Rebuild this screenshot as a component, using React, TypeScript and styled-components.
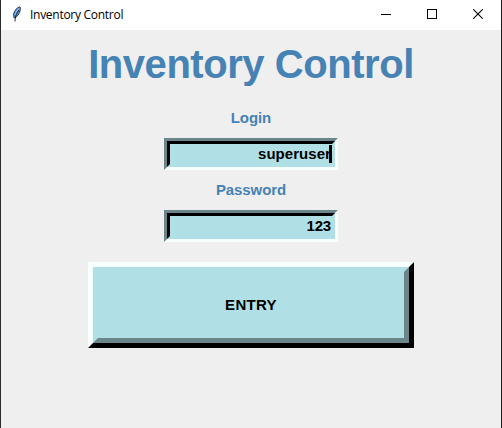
import React from "react";
import styled, { createGlobalStyle } from "styled-components";

const GlobalStyle = createGlobalStyle`
  * { box-sizing: border-box; }
  body { margin: 0; overflow: hidden; }
`;

const Window = styled.div`
  width: 502px;
  height: 428px;
  display: flex;
  flex-direction: column;
  background: #efefef;
  border-left: 1px solid #2b2b2b;
  border-right: 1px solid #1c1c1c;
  font-family: "Liberation Sans", Arial, sans-serif;
  font-weight: bold;
`;

const TitleBar = styled.header`
  height: 30px;
  flex: none;
  display: flex;
  align-items: center;
  background: #fff;
`;

const FeatherIcon = styled.svg`
  width: 16px;
  height: 16px;
  margin: -3px 5px 0 8px;
  flex: none;
`;

const Caption = styled.span`
  flex: 1;
  font: 400 12px/16px "Open Sans", "Noto Sans", sans-serif;
  letter-spacing: -0.28px;
  color: #000;
  white-space: nowrap;
`;

const WindowButton = styled.button`
  width: 46px;
  height: 30px;
  margin: 0;
  padding: 0 0 2px;
  border: 0;
  background: transparent;
  display: flex;
  align-items: center;
  justify-content: center;
  svg { display: block; }
`;

const Form = styled.main`
  flex: 1;
  display: flex;
  flex-direction: column;
  align-items: center;
`;

const Heading = styled.h1`
  margin: 11px 0 0;
  font-size: 40px;
  line-height: 46px;
  letter-spacing: -0.45px;
  color: #4682b4;
  white-space: nowrap;
`;

const Label = styled.label<{ $gap: number }>`
  margin-top: ${(p) => p.$gap}px;
  height: 18px;
  font-size: 15px;
  line-height: 18px;
  letter-spacing: -0.08px;
  color: #4682b4;
`;

const SunkenFrame = styled.div`
  width: 174px;
  height: 32px;
  margin-top: 11px;
  border: 3px solid;
  border-color: #6a868a #f8ffff #f8ffff #6a868a;
`;

const SunkenField = styled.div`
  height: 26px;
  border: 3px solid;
  border-color: #000 #b0e0e6 #b0e0e6 #000;
  background: #b0e0e6;
  display: flex;
  align-items: center;
  justify-content: flex-end;
  position: relative;
`;

const Value = styled.span<{ $spacing: number }>`
  font-size: 15px;
  line-height: 18px;
  letter-spacing: ${(p) => p.$spacing}px;
  color: #000;
  margin-right: 1px;
`;

const Caret = styled.i`
  position: absolute;
  right: 0;
  top: 1px;
  width: 3px;
  height: 18px;
  background: #000;
`;

const RaisedFrame = styled.button`
  width: 326px;
  height: 86px;
  margin: 20px 0 0;
  padding: 0;
  border: 5px solid;
  border-color: #f8ffff #000 #000 #f8ffff;
  background: #b0e0e6;
  font: inherit;
`;

const RaisedFace = styled.span`
  width: 316px;
  height: 76px;
  padding-bottom: 2px;
  border: 5px solid;
  border-color: #b0e0e6 #6a868a #6a868a #b0e0e6;
  display: flex;
  align-items: center;
  justify-content: center;
  font-size: 15px;
  letter-spacing: 0.3px;
  color: #000;
`;

function Entry({ value, spacing = 0, focused = false }: { value: string; spacing?: number; focused?: boolean }) {
  return (
    <SunkenFrame>
      <SunkenField>
        <Value $spacing={spacing}>{value}</Value>
        {focused && <Caret />}
      </SunkenField>
    </SunkenFrame>
  );
}

export default function App() {
  return (
    <>
      <GlobalStyle />
      <Window>
        <TitleBar>
          <FeatherIcon viewBox="0 0 16 16">
            <path d="M10.8.8C8 1.500 5.300 4.500 4.500 8.200L5 12l2.200-1C10 9 11.700 5 11.400 1.500Z" fill="#4f8fd8" stroke="#1c2a3c" strokeWidth=".8" />
            <path d="M10 2.300C8.200 3.800 6.800 6 6.200 9" fill="none" stroke="#a5cdf0" strokeWidth="1.100" />
            <path d="M9.800 4C7.800 7 6.300 9.500 6 15.500" fill="none" stroke="#111" strokeWidth=".9" />
          </FeatherIcon>
          <Caption>Inventory Control</Caption>
          <WindowButton aria-label="Minimize">
            <svg width="10" height="10" shapeRendering="crispEdges"><path d="M0 5.500h10" stroke="#000" /></svg>
          </WindowButton>
          <WindowButton aria-label="Maximize">
            <svg width="10" height="10" shapeRendering="crispEdges"><path d="M.5.5h9v9h-9z" fill="none" stroke="#000" /></svg>
          </WindowButton>
          <WindowButton aria-label="Close">
            <svg width="10" height="10"><path d="M.3.3l9.400 9.400M9.700.3L.3 9.700" stroke="#000" strokeWidth="1.100" /></svg>
          </WindowButton>
        </TitleBar>
        <Form>
          <Heading>Inventory Control</Heading>
          <Label $gap={22}>Login</Label>
          <Entry value="superuser" spacing={0.05} focused />
          <Label $gap={11}>Password</Label>
          <Entry value="123" spacing={-0.2} />
          <RaisedFrame>
            <RaisedFace>ENTRY</RaisedFace>
          </RaisedFrame>
        </Form>
      </Window>
    </>
  );
}
